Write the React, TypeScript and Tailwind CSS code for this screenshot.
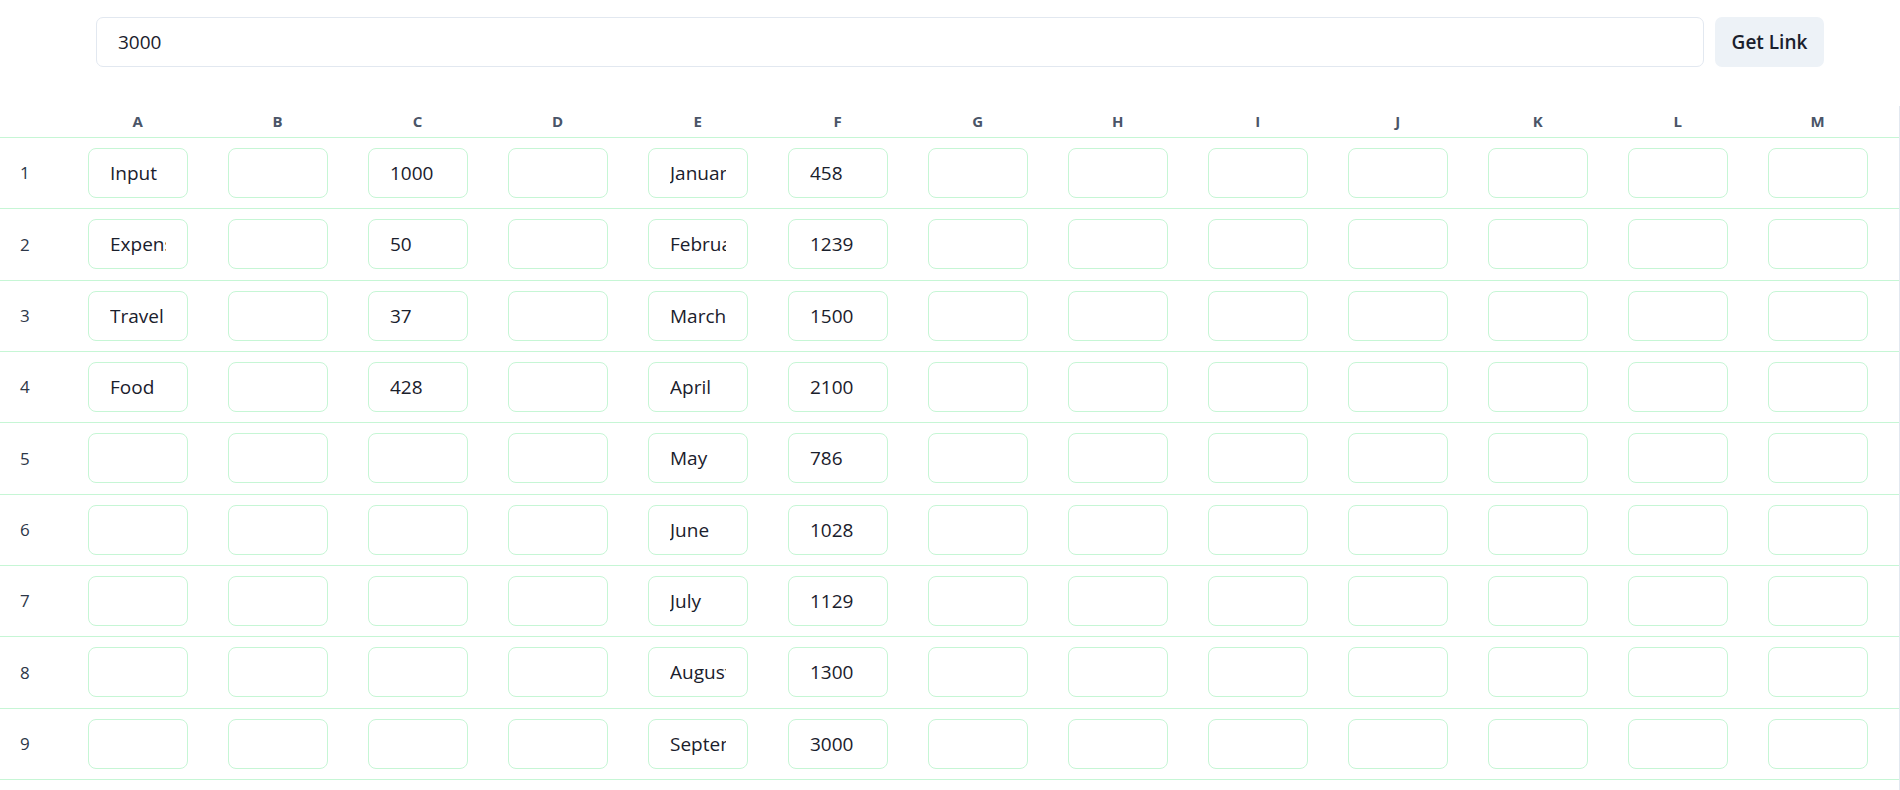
import React from 'react';

const columns = ['A', 'B', 'C', 'D', 'E', 'F', 'G', 'H', 'I', 'J', 'K', 'L', 'M'];

const data: Record<string, string[]> = {
  A: ['Input', 'Expenses', 'Travel', 'Food'],
  C: ['1000', '50', '37', '428'],
  E: ['January', 'February', 'March', 'April', 'May', 'June', 'July', 'August', 'September', 'October'],
  F: ['458', '1239', '1500', '2100', '786', '1028', '1129', '1300', '3000'],
};

const rows = Array.from({ length: 10 }, (_, i) => i);

export default function App() {
  return (
    <div
      className="h-[790px] w-[1900px] overflow-hidden bg-white text-[#1a202c]"
      style={{ fontFamily: '"Open Sans", "Noto Sans", sans-serif' }}
    >
      {/* Link bar */}
      <div className="flex gap-[11px] pl-[96px] pt-[17px]">
        <input
          className="h-[50px] w-[1608px] rounded-[7px] border border-[#e2e8f0] px-[21px] text-[19px] text-[#1a202c] outline-none"
          defaultValue="3000"
        />
        <button className="h-[50px] w-[109px] rounded-[7px] bg-[#edf2f7] text-[19px] font-semibold text-[#1a202c]">
          Get Link
        </button>
      </div>

      {/* Sheet */}
      <div className="mt-[39px] w-[1900px] border-r border-[#e2e8f0]">
        <div className="flex h-[32px] items-center border-b border-[#c6f6d5]">
          <div className="w-[68px] shrink-0" />
          {columns.map((c) => (
            <div
              key={c}
              className="w-[140px] shrink-0 text-center text-[15px] font-bold tracking-wider text-[#4a5568]"
            >
              {c}
            </div>
          ))}
        </div>

        {rows.map((r) => (
          <div key={r} className="flex items-center border-b border-[#c6f6d5] py-[10.16px]">
            <div className="w-[68px] shrink-0 pl-[20px] text-[17px] text-[#2d3748]">{r < 9 ? r + 1 : ''}</div>
            {columns.map((c) => (
              <div key={c} className="flex w-[140px] shrink-0 justify-center">
                <input
                  className="h-[50px] w-[100px] rounded-[8px] border border-[#c6f6d5] px-[21px] text-[19px] text-[#1a202c] outline-none"
                  defaultValue={data[c]?.[r] ?? ''}
                />
              </div>
            ))}
          </div>
        ))}
      </div>
    </div>
  );
}
